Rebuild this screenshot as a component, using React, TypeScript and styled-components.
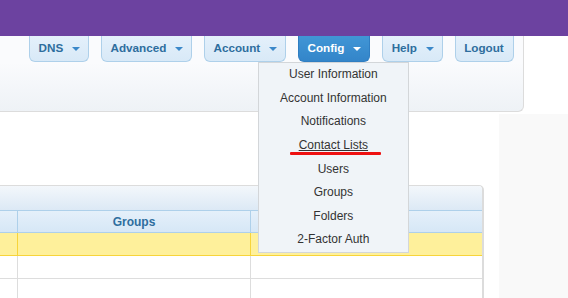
import React from "react";
import styled, { createGlobalStyle, css } from "styled-components";

const Global = createGlobalStyle`
  html, body { margin: 0; padding: 0; background: #fff; }
  body { font-family: "Liberation Sans", Arial, sans-serif; overflow: hidden; }
`;

const TopBar = styled.div`
  height: 36px;
  background: #6c42a0;
`;

const HeaderPanel = styled.div`
  box-sizing: border-box;
  width: 524px;
  height: 76px;
  border-right: 1px solid #dcdcdc;
  border-bottom: 1px solid #dcdcdc;
  border-bottom-right-radius: 6px;
  background: linear-gradient(#fafbfd 35%, #eef2f6);
`;

const Nav = styled.nav`
  display: flex;
  align-items: flex-start;
  gap: 12px;
  padding-left: 29px;
`;

const NavItem = styled.div`
  position: relative;
`;

const NavButton = styled.div<{ $active?: boolean; $plain?: boolean }>`
  box-sizing: border-box;
  height: 26px;
  display: flex;
  align-items: center;
  gap: 9px;
  padding: 0 ${(p) => (p.$plain ? "9px" : "7.6px")} 3px 8.6px;
  border: 1px solid #aed0ea;
  border-top: none;
  border-radius: 0 0 6px 6px;
  background: linear-gradient(#e4f0fb, #d8e9f7);
  color: #2e6e9e;
  font-size: 11.7px;
  font-weight: bold;
  white-space: nowrap;
  ${(p) =>
    p.$active &&
    css`
      border-color: #2f7ec2;
      background: linear-gradient(#4196d6, #3385c9);
      color: #fff;
    `}
`;

const Caret = styled.span<{ $light?: boolean }>`
  width: 0;
  height: 0;
  margin-top: 4px;
  border-left: 4px solid transparent;
  border-right: 4px solid transparent;
  border-top: 4px solid ${(p) => (p.$light ? "#ffffff" : "#3b88c9")};
`;

const Menu = styled.ul`
  position: absolute;
  top: 26px;
  left: -40px;
  box-sizing: border-box;
  width: 151px;
  margin: 0;
  padding: 0;
  list-style: none;
  background: #f0f4f8;
  border: 1px solid #d3d6d9;
  z-index: 5;
`;

const MenuItem = styled.li<{ $current?: boolean }>`
  position: relative;
  height: 23.6px;
  display: flex;
  align-items: center;
  justify-content: center;
  padding-bottom: 1px;
  box-sizing: border-box;
  color: #333;
  font-size: 12px;
  white-space: nowrap;
  text-decoration: ${(p) => (p.$current ? "underline" : "none")};
`;

const RedMark = styled.span`
  position: absolute;
  left: 31px;
  top: 18px;
  width: 91px;
  height: 3px;
  background: #ee1111;
  border-radius: 1px;
`;

const BodyRow = styled.div`
  display: flex;
  align-items: stretch;
  min-height: calc(100vh - 112px);
`;

const Main = styled.main`
  width: 499px;
  flex: none;
`;

const Sidebar = styled.aside`
  flex: 1;
  margin-top: 2px;
  background: #f9f9f9;
`;

const Table = styled.div`
  box-sizing: border-box;
  width: 484px;
  margin-top: 73px;
  border: 1px solid #dcdcdc;
  border-left: none;
  border-right-width: 2px;
  border-top-right-radius: 5px;
  overflow: hidden;
  background: #fff;
`;

const TitleBar = styled.div`
  height: 24px;
  background: linear-gradient(#f3f7fb, #dce9f5);
`;

type Tone = "head" | "hi" | "plain";

const toneBorder: Record<Tone, string> = {
  head: "#aed0ea",
  hi: "#f7d43a",
  plain: "#dddddd",
};

const Row = styled.div<{ $tone: Tone }>`
  box-sizing: border-box;
  display: grid;
  grid-template-columns: 18px 233px 1fr;
  height: 23px;
  border-bottom: 1px solid ${(p) => toneBorder[p.$tone]};
  ${(p) =>
    p.$tone === "head" &&
    css`
      border-top: 1px solid #aed0ea;
      background: linear-gradient(#e5f0fa, #d6e7f6);
    `}
  ${(p) =>
    p.$tone === "hi" &&
    css`
      background: #fef09b;
    `}
`;

const Cell = styled.div<{ $tone: Tone; $last?: boolean }>`
  display: flex;
  align-items: center;
  justify-content: center;
  border-right: ${(p) => (p.$last ? "none" : `1px solid ${toneBorder[p.$tone]}`)};
  color: #2e6e9e;
  font-size: 12px;
  font-weight: bold;
`;

const menuItems = [
  "User Information",
  "Account Information",
  "Notifications",
  "Contact Lists",
  "Users",
  "Groups",
  "Folders",
  "2-Factor Auth",
];

const navItems = [
  { label: "DNS", caret: true },
  { label: "Advanced", caret: true },
  { label: "Account", caret: true },
  { label: "Config", caret: true, active: true },
  { label: "Help", caret: true },
  { label: "Logout", caret: false },
];

function TableRow({ tone, cols }: { tone: Tone; cols: string[] }) {
  return (
    <Row $tone={tone}>
      {cols.map((c, i) => (
        <Cell key={i} $tone={tone} $last={i === cols.length - 1}>
          {c}
        </Cell>
      ))}
    </Row>
  );
}

export default function App() {
  return (
    <>
      <Global />
      <TopBar />
      <HeaderPanel>
        <Nav>
          {navItems.map((n) => (
            <NavItem key={n.label}>
              <NavButton $active={n.active} $plain={!n.caret}>
                {n.label}
                {n.caret && <Caret $light={n.active} />}
              </NavButton>
              {n.active && (
                <Menu>
                  {menuItems.map((m) => (
                    <MenuItem key={m} $current={m === "Contact Lists"}>
                      {m}
                      {m === "Contact Lists" && <RedMark />}
                    </MenuItem>
                  ))}
                </Menu>
              )}
            </NavItem>
          ))}
        </Nav>
      </HeaderPanel>
      <BodyRow>
        <Main>
          <Table>
            <TitleBar />
            <TableRow tone="head" cols={["", "Groups", ""]} />
            <TableRow tone="hi" cols={["", "", ""]} />
            <TableRow tone="plain" cols={["", "", ""]} />
            <TableRow tone="plain" cols={["", "", ""]} />
          </Table>
        </Main>
        <Sidebar />
      </BodyRow>
    </>
  );
}
